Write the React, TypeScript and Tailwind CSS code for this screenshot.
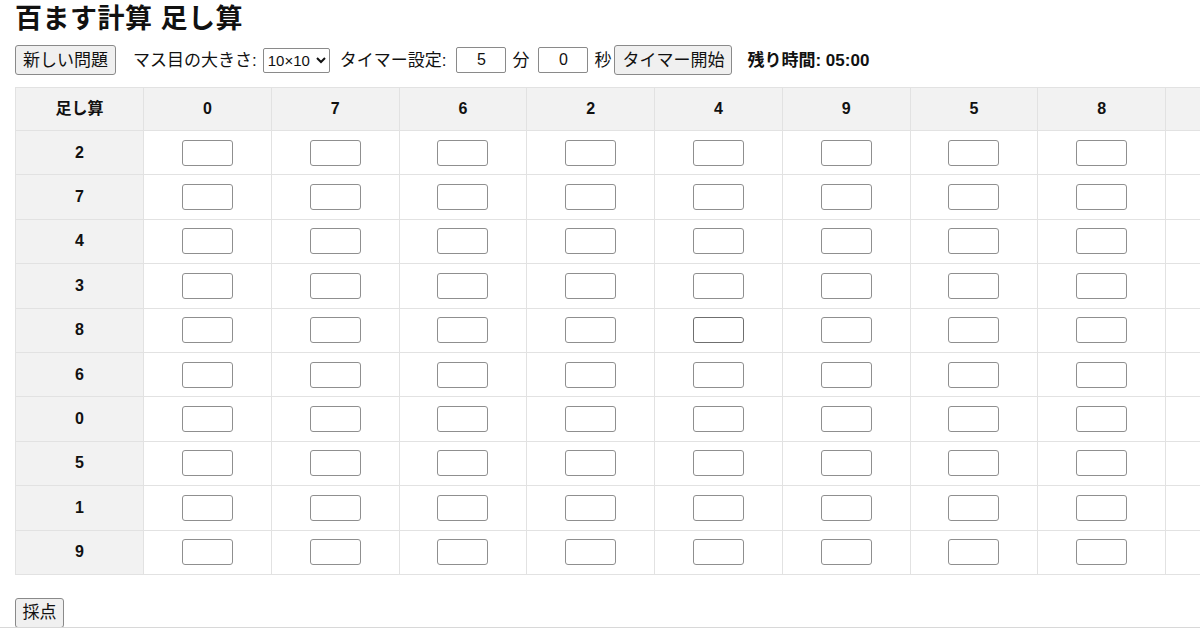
import { useState } from "react";

const COLS = [0, 7, 6, 2, 4, 9, 5, 8, 1, 3];
const ROWS = [2, 7, 4, 3, 8, 6, 0, 5, 1, 9];

const FONT = "[font-family:'Liberation_Sans','Noto_Sans_CJK_JP',sans-serif]";

function Cell({ hot }: { hot?: boolean }) {
  return (
    <td className="border border-[#e2e2e2] p-0 text-center">
      <input
        type="text"
        className={
          "mx-auto block h-[26px] w-[51px] rounded-[3px] border bg-white outline-none " +
          (hot ? "border-[#6f6f6f]" : "border-[#8f8f8f]")
        }
      />
    </td>
  );
}

export default function App() {
  const [size, setSize] = useState("10");
  const [min, setMin] = useState("5");
  const [sec, setSec] = useState("0");

  return (
    <div className={`h-[628px] w-[1200px] overflow-hidden border-b border-[#d8d8d8] bg-white text-[#111] ${FONT}`}>
      <div className="pl-[15px]">
        <h1 className="pt-[1px] text-[27px] font-bold leading-[36px] tracking-[0.5px]">百ます計算 足し算</h1>

        {/* controls */}
        <div className="mt-[8px] flex h-[30px] items-center text-[17px] leading-none">
          <button className="h-[30px] w-[101px] rounded-[3px] border border-[#8a8a8a] bg-[#f0f0f0] text-[17px]">
            新しい問題
          </button>
          <span className="ml-[17px]">マス目の大きさ:</span>
          <select
            value={size}
            onChange={(e) => setSize(e.target.value)}
            className="ml-[6px] h-[25px] w-[67px] rounded-[2px] border border-[#8a8a8a] bg-white px-0 text-[15px]"
          >
            <option value="10">10×10</option>
            <option value="5">5×5</option>
          </select>
          <span className="ml-[10px]">タイマー設定:</span>
          <input
            value={min}
            onChange={(e) => setMin(e.target.value)}
            className="ml-[10px] h-[26px] w-[50px] rounded-[2px] border border-[#8a8a8a] text-center text-[16px]"
          />
          <span className="ml-[6px]">分</span>
          <input
            value={sec}
            onChange={(e) => setSec(e.target.value)}
            className="ml-[9px] h-[26px] w-[50px] rounded-[2px] border border-[#8a8a8a] text-center text-[16px]"
          />
          <span className="ml-[6px]">秒</span>
          <button className="ml-[3px] h-[30px] w-[118px] rounded-[3px] border border-[#8a8a8a] bg-[#f0f0f0] text-[17px]">
            タイマー開始
          </button>
          <span className="ml-[15px] font-bold">残り時間: 05:00</span>
        </div>

        {/* grid */}
        <table className="mt-[12px] table-fixed border-collapse">
          <thead>
            <tr className="h-[43px] bg-[#f2f2f2]">
              <th className="w-[128px] min-w-[128px] border border-[#e2e2e2] text-[16px] font-bold">足し算</th>
              {COLS.map((c, i) => (
                <th key={i} className="w-[127.75px] min-w-[127.75px] border border-[#e2e2e2] text-[16px] font-bold">
                  {c}
                </th>
              ))}
            </tr>
          </thead>
          <tbody>
            {ROWS.map((r, ri) => (
              <tr key={ri} className="h-[44.4px]">
                <th className="border border-[#e2e2e2] bg-[#f2f2f2] text-[16px] font-bold">{r}</th>
                {COLS.map((_, ci) => (
                  <Cell key={ci} hot={ri === 4 && ci === 4} />
                ))}
              </tr>
            ))}
          </tbody>
        </table>

        <button className="mt-[23px] h-[30px] w-[49px] rounded-[3px] border border-[#8a8a8a] bg-[#f0f0f0] text-[17px]">
          採点
        </button>
      </div>
    </div>
  );
}
